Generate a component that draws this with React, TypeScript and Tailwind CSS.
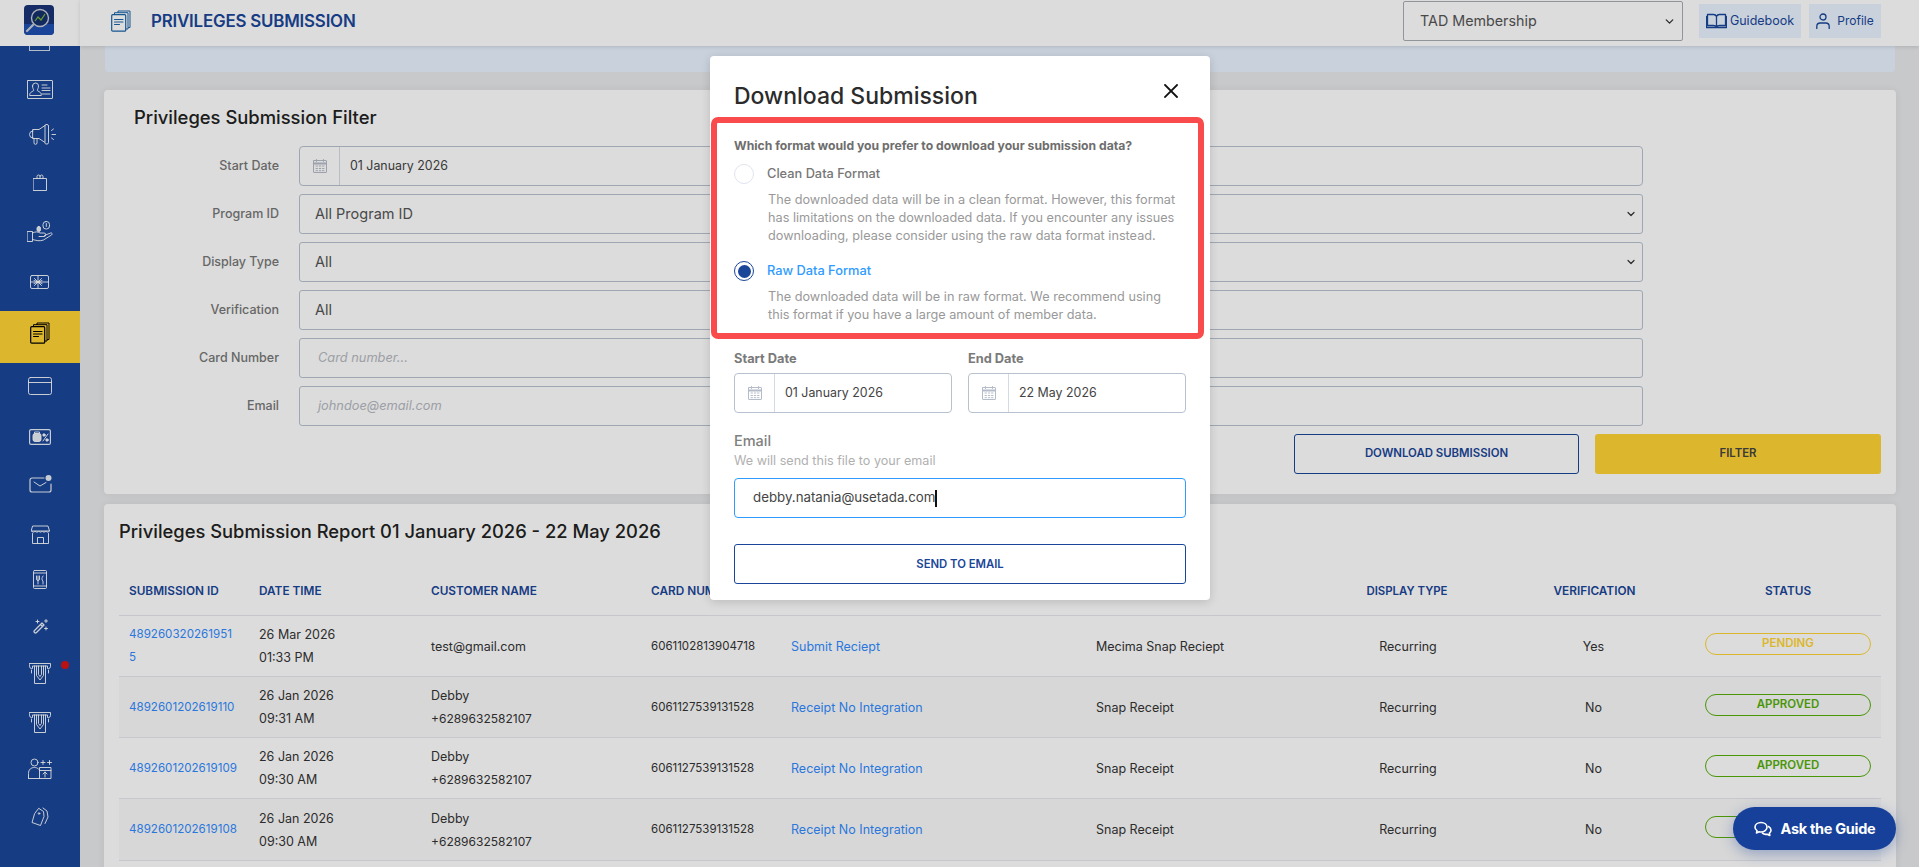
import React from "react";
import { ChevronDown } from "lucide-react";

const font = "font-['Inter','Open_Sans',sans-serif]";

const Ico = ({ w, h, children, className = "" }: { w: number; h: number; children: React.ReactNode; className?: string }) => (
  <svg width={w} height={h} viewBox={`0 0 ${w} ${h}`} fill="none" stroke="currentColor" strokeWidth="1" strokeLinecap="round" strokeLinejoin="round" className={className}>
    {children}
  </svg>
);

const DocsIcon = ({ className = "" }: { className?: string }) => (
  <Ico w={20} h={22} className={className}>
    <rect x=".7" y="4.700" width="14" height="16.500" rx="1" strokeWidth="1.200" />
    <path d="M3.500 9.500h8.500M3.500 12h8.500M3.500 14.500h5" strokeWidth="1.100" />
    <path d="M3.500 4.500V2.700h13.500V19h-2" />
    <path d="M7 2.500V1h12v16.500h-1.500" />
  </Ico>
);

const CalIcon = () => (
  <Ico w={14} h={14} className="text-[#b5bcc9]">
    <rect x=".5" y="1.500" width="13" height="12" rx=".5" />
    <path d="M.5 4.500h13" strokeWidth="2" />
    <path d="M3.500 .5v2M10.500 .5v2M3 7h1.500M6.300 7h1.500M9.500 7h1.500M3 9.500h1.500M6.300 9.500h1.500M9.500 9.500h1.500M3 11.700h1.500M6.300 11.700h1.500M9.500 11.700h1.500" />
  </Ico>
);

const Atm = () => (
  <Ico w={22} h={21}>
    <path d="M.5 .5h21v3a2 2 0 0 1-2 2h-1V3h-15v2.500h-1a2 2 0 0 1-2-2z" />
    <path d="M5.500 3v17.500h11V3M7.500 3v9.500l3.500 4.500 3.500-4.500V3M9.500 3v8.500l1.500 2 1.500-2V3M2.500 7v3M19.500 7v3" />
  </Ico>
);

function Slot({ className, children }: { className: string; children: React.ReactNode }) {
  return <div className={`h-[30px] shrink-0 flex items-center justify-center text-white/90 ${className}`}>{children}</div>;
}

function Sidebar() {
  return (
    <aside className="w-[80px] shrink-0 bg-[#1a4699] flex flex-col overflow-hidden h-[867px]">
      <div className="h-[46px] shrink-0 bg-white flex items-start justify-center pt-[5px] pr-[2px]">
        <svg viewBox="0 0 30 30" className="w-[30px] h-[30px]">
          <rect width="30" height="30" rx="4" fill="#1a3478" />
          <path d="M0 19h30v7a4 4 0 0 1-4 4H4a4 4 0 0 1-4-4z" fill="#1f4fb0" />
          <circle cx="16" cy="13" r="8.500" fill="#16306e" stroke="#c9ced8" strokeWidth="1.400" />
          <path d="M9 20l-6 6" stroke="#c9ced8" strokeWidth="2.200" strokeLinecap="round" />
          <path d="M11 16l3-4 3 3 4-6" stroke="#7fb83a" strokeWidth="1.200" fill="none" />
        </svg>
      </div>
      <div className="h-[5px] shrink-0 flex justify-center">
        <div className="w-[21px] h-[5px] border border-t-0 border-white/80 ml-[-1px]" />
      </div>
      <Slot className="mt-[23px]">
        <Ico w={26} h={19}>
          <rect x=".5" y=".5" width="25" height="18" rx=".5" />
          <path d="M5.500 6a3 3 0 0 1 6 0c0 2-1 3-1.200 4.500l3 2c.8.5 1 1.500 1 3H2.700c0-1.500.2-2.500 1-3l3-2C6.500 9 5.500 8 5.500 6zM15 5h5M15 8h8M15 10.500h8M15 14h8" />
        </Ico>
      </Slot>
      <Slot className="mt-[15px]">
        <Ico w={29} h={21} className="ml-[2px]">
          <path d="M6 5.500h6l6-4v17l-6-4H6zM6 7a3.500 3.500 0 0 0 0 7M7 14.500v4.300a1.500 1.500 0 0 0 3 0v-4.300M18 1.500a1 1 0 0 1 1-1h1a1.500 1.500 0 0 1 1.500 1.500v16.500a1.500 1.500 0 0 1-1.500 1.500h-1a1 1 0 0 1-1-1M24.500 6.500l2-1.500M25 10.500h3.500M24.500 14l2 1.500" />
        </Ico>
      </Slot>
      <Slot className="mt-[18px]">
        <Ico w={14} h={17}>
          <rect x=".5" y="4.500" width="13" height="12" />
          <path d="M4 4.500V2.500a1.500 1.500 0 0 1 3 0v2M7 2.500a1.500 1.500 0 0 1 3 0v2" />
        </Ico>
      </Slot>
      <Slot className="mt-[19px]">
        <Ico w={26} h={21}>
          <rect x=".5" y="10.500" width="5" height="10" />
          <path d="M5.500 12c3-1.500 5-1.500 7.500 0h4a1.500 1.500 0 0 1 0 3.500h-5M17.500 14.500l6-2.500c1.500-.5 2.300 1 1 2l-8 5c-4 1.500-7 .5-11-.5" />
          <rect x="16" y=".5" width="6.500" height="7.500" rx="3" />
          <path d="M19.300 2.500v3" />
          <rect x="10" y="5.500" width="3.500" height="5" rx="1.700" fill="currentColor" />
        </Ico>
      </Slot>
      <Slot className="mt-[21px] pr-[1px]">
        <Ico w={19} h={14}>
          <rect x=".5" y=".5" width="18" height="13" rx="1.500" />
          <path d="M.5 7h18M8 .5v13M8 7L4.500 3.500M8 7l-3.500 3.500M8 7l3.500-3.500M8 7l3.500 3.500M4 5.500l8 3M4 8.500l8-3" />
        </Ico>
      </Slot>
      <div className="mt-[14px] h-[52px] shrink-0 bg-[#ffd536] text-black flex items-start justify-center pt-[11px]">
        <DocsIcon />
      </div>
      <Slot className="mt-[8px]">
        <Ico w={24} h={18}>
          <rect x=".5" y=".5" width="23" height="17" rx="2" />
          <path d="M.5 5.500h23" />
        </Ico>
      </Slot>
      <Slot className="mt-[21px]">
        <Ico w={22} h={16}>
          <rect x=".6" y=".6" width="20.800" height="14.800" rx="1.500" strokeWidth="1.200" />
          <rect x="4" y="4.500" width="8" height="8" rx="2" fill="currentColor" />
          <path d="M5.500 4V3h5v1" />
          <path d="M14 12l5-7" />
          <circle cx="15" cy="6" r="1.200" fill="currentColor" />
          <circle cx="18" cy="11" r="1.200" fill="currentColor" />
        </Ico>
      </Slot>
      <Slot className="mt-[17px]">
        <Ico w={23} h={18}>
          <path d="M15 3H3a2 2 0 0 0-2 2v10a2 2 0 0 0 2 2h17a2 2 0 0 0 2-2V9" strokeWidth="1.200" />
          <path d="M5 7l6 4 6-3.500" />
          <circle cx="19.500" cy="3" r="3" fill="currentColor" stroke="none" />
        </Ico>
      </Slot>
      <Slot className="mt-[20px]">
        <Ico w={19} h={19}>
          <path d="M2 1h15l1.500 5H.5zM.5 6a2 2 0 0 0 3.600 0 2 2 0 0 0 3.600 0 2 2 0 0 0 3.600 0 2 2 0 0 0 3.600 0 2 2 0 0 0 3.600 0M1.500 8.500v10h16v-10M6.500 18.500v-6h6v6" />
        </Ico>
      </Slot>
      <Slot className="mt-[15px]">
        <Ico w={14} h={19}>
          <rect x=".5" y=".5" width="13" height="18" rx="1" />
          <path d="M.5 3h13M.5 16h13M3.500 6v3a1.500 1.500 0 0 0 3 0V6M5 6v8M10 6c-1.500 2-1.500 4 0 5v3" />
        </Ico>
      </Slot>
      <Slot className="mt-[17px]">
        <Ico w={15} h={15}>
          <path d="M1.500 11.500L9 4l2 2-7.500 7.500a1.400 1.400 0 0 1-2-2zM7.500 5.500l2 2" strokeWidth="1.300" />
          <path d="M4.500 1v3M3 2.500h3M13 .5v3M11.500 2h3M13 8v3M11.500 9.500h3" />
        </Ico>
      </Slot>
      <div className="relative mt-[17px]">
        <Slot className=""><Atm /></Slot>
        <span className="absolute left-[61px] top-[3px] w-[8px] h-[8px] rounded-full bg-[#d81616]" />
      </div>
      <Slot className="mt-[19px]"><Atm /></Slot>
      <Slot className="mt-[16px]">
        <Ico w={24} h={21}>
          <circle cx="6.500" cy="4.500" r="3.500" />
          <path d="M.5 20.500v-5c0-4 2.500-6 6-6 1.500 0 3 .5 4 1.500M.5 20.500h22.500V9.500H11.500v11M11.500 12.500h11.500M17 19v-5M15 16l2-2 2 2M13 4.500h4M15 2.500v4M19.500 4.500h4M21.500 2.500v4" />
        </Ico>
      </Slot>
      <Slot className="mt-[18px]">
        <Ico w={18} h={19}>
          <path d="M8 1.500l4.500 3 .5 5-3.500 9L1 15.500 3.500 7z" />
          <circle cx="8" cy="6.500" r=".8" />
          <path d="M12 1l4 3 1 6-3 6.500" />
        </Ico>
      </Slot>
    </aside>
  );
}

function Header() {
  return (
    <header className="h-[46px] shrink-0 bg-white shadow-[0_1px_4px_rgba(0,0,0,0.12)] flex items-center relative">
      <DocsIcon className="ml-[31px] mb-[5px] text-[#1a64a8]" />
      <h1 className="ml-[20px] mb-[3px] text-[16.900px] font-semibold text-[#1a4699] tracking-[-0.2px]">PRIVILEGES SUBMISSION</h1>
      <div className="ml-auto w-[280px] h-[40px] mb-[4px] border border-[#a9adb3] rounded-[2px] flex items-center justify-between pl-[16px] pr-[6px] text-[14.300px] text-[#555]">
        <span>TAD Membership</span>
        <ChevronDown className="w-[13px] h-[13px] text-[#333]" strokeWidth={2.4} />
      </div>
      <div className="ml-[16px] w-[102px] h-[34px] bg-[#e8f3ff] flex items-center justify-center gap-[3px] text-[12.500px] text-[#1a4699] mb-[4px]">
        <Ico w={21} h={16} className="shrink-0">
          <path d="M1.500 1.500h6c1.300 0 2.500.7 3 2 .5-1.300 1.700-2 3-2h6v11h-6c-1.300 0-2.500.5-3 1.500-.5-1-1.700-1.500-3-1.500h-6zM10.500 3.500V14M.5 3.500v11h20v-11" strokeWidth="1.300" />
        </Ico>
        <span>Guidebook</span>
      </div>
      <div className="ml-[8px] mr-[38px] w-[72px] h-[34px] bg-[#e8f3ff] flex items-center justify-center gap-[7px] text-[12px] text-[#1a4699] mb-[4px]">
        <Ico w={14} h={16} className="shrink-0">
          <circle cx="7" cy="4" r="3" strokeWidth="1.300" />
          <path d="M.8 15.500v-2c0-2 1.500-3.500 3.500-3.500h5.400c2 0 3.500 1.500 3.500 3.500v2" strokeWidth="1.300" />
        </Ico>
        <span>Profile</span>
      </div>
    </header>
  );
}

function CalBox({ value }: { value: string }) {
  return (
    <div className="h-[40px] flex-1 min-w-0 flex border border-[#b8c2cf] rounded-[4px] items-center text-[12.400px] text-[#444] bg-white">
      <div className="w-[40px] h-full shrink-0 border-r border-[#d5dbe3] flex items-center justify-center">
        <CalIcon />
      </div>
      <span className="pl-[10px]">{value}</span>
    </div>
  );
}

const filterRows = [
  { label: "Program ID", text: "All Program ID", select: true },
  { label: "Display Type", text: "All", select: true },
  { label: "Verification", text: "All" },
  { label: "Card Number", ph: "Card number..." },
  { label: "Email", ph: "johndoe@email.com" },
];

function FilterCard() {
  return (
    <section className="h-[404px] bg-white rounded-[4px] shadow-[0_0_8px_rgba(0,0,0,0.06)] pt-[17px]">
      <h2 className="ml-[30px] text-[18.400px] font-medium text-[#222] leading-[20px]">Privileges Submission Filter</h2>
      <div className="mt-[19px] flex flex-col gap-[8px]">
        <div className="flex items-center">
          <label className="w-[175px] text-right text-[12.500px] font-medium text-[#777]">Start Date</label>
          <div className="ml-[20px] w-[1344px] flex"><CalBox value="01 January 2026" /></div>
        </div>
        {filterRows.map((r) => (
          <div key={r.label} className="flex items-center">
            <label className="w-[175px] text-right text-[12.500px] font-medium text-[#777]">{r.label}</label>
            <div className={`ml-[20px] w-[1344px] h-[40px] border border-[#b8c2cf] rounded-[3px] flex items-center justify-between pr-[5px] ${r.ph ? "pl-[18px] text-[12.800px] italic text-[#b5b9c0]" : "pl-[15px] text-[14.500px] text-[#555]"}`}>
              <span>{r.text ?? r.ph}</span>
              {r.select && <ChevronDown className="w-[12px] h-[12px] text-[#333]" strokeWidth={2.4} />}
            </div>
          </div>
        ))}
      </div>
      <div className="flex justify-end gap-[16px] mr-[15px] mt-[8px]">
        <button className="w-[285px] h-[40px] border border-[#1a4699] rounded-[3px] text-[11.400px] font-semibold text-[#1a4699]">DOWNLOAD SUBMISSION</button>
        <button className="w-[286px] h-[40px] bg-[#ffd536] rounded-[3px] text-[11.400px] font-semibold text-[#444]">FILTER</button>
      </div>
    </section>
  );
}

const tableRows = [
  { id: ["489260320261951", "5"], d: "26 Mar 2026", t: "01:33 PM", name: ["test@gmail.com"], card: "6061102813904718", prog: "Submit Reciept", ben: "Mecima Snap Reciept", ver: "Yes", st: "PENDING" },
  { id: ["4892601202619110"], d: "26 Jan 2026", t: "09:31 AM", name: ["Debby", "+6289632582107"], card: "6061127539131528", prog: "Receipt No Integration", ben: "Snap Receipt", ver: "No", st: "APPROVED" },
  { id: ["4892601202619109"], d: "26 Jan 2026", t: "09:30 AM", name: ["Debby", "+6289632582107"], card: "6061127539131528", prog: "Receipt No Integration", ben: "Snap Receipt", ver: "No", st: "APPROVED" },
  { id: ["4892601202619108"], d: "26 Jan 2026", t: "09:30 AM", name: ["Debby", "+6289632582107"], card: "6061127539131528", prog: "Receipt No Integration", ben: "Snap Receipt", ver: "No", st: "APPROVED" },
];

const cols = "grid grid-cols-[130px_172px_220px_140px_305px_234px_174px_201px_186px]";

function ReportCard() {
  return (
    <section className="bg-white rounded-[4px] shadow-[0_0_8px_rgba(0,0,0,0.06)] h-[420px] pt-[17px] px-[15px]">
      <h2 className="text-[18.350px] font-medium text-[#222] leading-[20px]">Privileges Submission Report 01 January 2026 - 22 May 2026</h2>
      <div className="mt-[27px]">
        <div className={`${cols} h-[48px] items-center border-b border-[#e6e7ee] font-semibold text-[11.800px] text-[#1a4699]`}>
          <div className="pl-[10px]">SUBMISSION ID</div>
          <div className="pl-[10px]">DATE TIME</div>
          <div className="pl-[10px]">CUSTOMER NAME</div>
          <div className="pl-[10px] whitespace-nowrap">CARD NUMBER</div>
          <div className="pl-[10px]">PROGRAM NAME</div>
          <div className="pl-[10px]">BENEFIT NAME</div>
          <div className="text-center text-[11.400px]">DISPLAY TYPE</div>
          <div className="text-center">VERIFICATION</div>
          <div className="text-center">STATUS</div>
        </div>
        {tableRows.map((r, i) => (
          <div key={i} className={`${cols} ${i === 3 ? "h-[62px]" : "h-[61px]"} items-center border-b border-[#e6e7ee] text-[12.500px] leading-[23px] text-[#333] ${i % 2 === 1 ? "bg-[#fafafa]" : ""}`}>
            <div className="pl-[10px] text-[#318bff] text-[11.600px]">
              {r.id.map((l) => <div key={l}>{l}</div>)}
            </div>
            <div className="pl-[10px]"><div>{r.d}</div><div>{r.t}</div></div>
            <div className="pl-[10px]">{r.name.map((l) => <div key={l} className={l.startsWith("+") ? "text-[12px]" : ""}>{l}</div>)}</div>
            <div className="pl-[10px] text-[11.500px]">{r.card}</div>
            <div className="pl-[10px] text-[#318bff]">{r.prog}</div>
            <div className="pl-[10px]">{r.ben}</div>
            <div className="text-center pl-[2px]">Recurring</div>
            <div className="text-center pr-[2px]">{r.ver}</div>
            <div className="flex justify-center">
              <div className={`w-[166px] h-[22px] mb-[5px] rounded-full border flex items-center justify-center text-[11.500px] font-semibold ${r.st === "PENDING" ? "border-[#ffd536] text-[#ffd536]" : "border-[#56ae09] text-[#56ae09]"}`}>{r.st}</div>
            </div>
          </div>
        ))}
      </div>
    </section>
  );
}

function Radio({ on }: { on?: boolean }) {
  return (
    <span className={`w-[20px] h-[20px] shrink-0 rounded-full flex items-center justify-center bg-white border ${on ? "border-[1.5px] border-[#1a4699]" : "border-[#e2e4ee]"}`}>
      {on && <span className="w-[13px] h-[13px] rounded-full bg-[#1a4699]" />}
    </span>
  );
}

function Modal() {
  return (
    <div className="absolute left-[710px] top-[56px] w-[500px] h-[544px] bg-white rounded-[4px] shadow-[0_2px_10px_rgba(0,0,0,0.15)] px-[24px] pt-[24px] z-30">
      <h2 className="text-[23px] font-medium text-[#2b2b2b] leading-[30px] pt-[1px] h-[30px]">Download Submission</h2>
      <svg width="14" height="14" viewBox="0 0 14 14" className="absolute left-[454px] top-[28px]" stroke="#111" strokeWidth="1.800" strokeLinecap="square">
        <path d="M1 1l12 12M13 1L1 13" />
      </svg>
      <p className="mt-[27px] text-[12.200px] leading-[18px] font-bold text-[#6e6e6e] whitespace-nowrap">Which format would you prefer to download your submission data?</p>
      <div className="mt-[9px] flex items-center gap-[13px]">
        <Radio />
        <span className="text-[12.800px] font-medium text-[#777]">Clean Data Format</span>
      </div>
      <p className="mt-[7px] pl-[34px] text-[12.700px] leading-[18px] text-[#999] whitespace-nowrap">
        The downloaded data will be in a clean format. However, this format<br />
        has limitations on the downloaded data. If you encounter any issues<br />
        downloading, please consider using the raw data format instead.
      </p>
      <div className="mt-[16px] flex items-center gap-[13px]">
        <Radio on />
        <span className="text-[12.800px] font-medium text-[#2f9bff]">Raw Data Format</span>
      </div>
      <p className="mt-[7px] pl-[34px] text-[12.700px] leading-[18px] text-[#999] whitespace-nowrap">
        The downloaded data will be in raw format. We recommend using<br />
        this format if you have a large amount of member data.
      </p>
      <div className="mt-[26px] grid grid-cols-2 gap-[16px]">
        <div>
          <label className="block text-[12.800px] leading-[18px] font-bold text-[#7a7a7a] mb-[5px]">Start Date</label>
          <div className="flex"><CalBox value="01 January 2026" /></div>
        </div>
        <div>
          <label className="block text-[12.800px] leading-[18px] font-bold text-[#7a7a7a] mb-[5px]">End Date</label>
          <div className="flex"><CalBox value="22 May 2026" /></div>
        </div>
      </div>
      <label className="block mt-[18px] text-[14.500px] leading-[20px] font-medium text-[#808080]">Email</label>
      <p className="mt-[1px] text-[12.600px] leading-[18px] text-[#b0b0b0]">We will send this file to your email</p>
      <div className="mt-[8px] h-[40px] border border-[#2f9bff] rounded-[4px] flex items-center pl-[18px] text-[13.300px] text-[#444]">
        <span>debby.natania@usetada.com</span>
        <span className="w-[2px] h-[17px] bg-[#111]" />
      </div>
      <button className="mt-[26px] w-full h-[40px] border border-[#1a4699] rounded-[3px] text-[11.300px] font-semibold text-[#1a4699]">SEND TO EMAIL</button>
      <div className="absolute left-[1px] top-[61px] w-[493px] h-[222px] border-[6px] border-[#f94b4b] rounded-[7px] pointer-events-none" />
    </div>
  );
}

export default function App() {
  return (
    <div className={`${font} relative h-[867px] overflow-hidden flex bg-[#e8e9eb]`}>
      <Sidebar />
      <div className="flex-1 flex flex-col min-w-0">
        <Header />
        <main className="flex flex-col pl-[24px] pr-[23px]">
          <div className="h-[26px] bg-[#e8f3ff] rounded-b-[4px] mx-[1px]" />
          <div className="h-[18px]" />
          <FilterCard />
          <div className="h-[10px]" />
          <ReportCard />
        </main>
      </div>
      <div className="absolute inset-0 bg-black/[0.137] z-20" />
      <Modal />
      <button className="absolute left-[1733px] top-[807px] w-[163px] h-[43px] rounded-full bg-[#16409a] text-white text-[14.500px] font-bold tracking-[-0.3px] flex items-center justify-center gap-[9px] shadow-[0_4px_14px_rgba(22,64,154,0.35)] z-30">
        <Ico w={18} h={16} className="shrink-0">
          <path d="M7 1.500c3.300 0 6 2 6 4.700S10.300 11 7 11c-.7 0-1.300-.1-1.900-.3L2.500 12l.5-2.300C1.800 8.800 1 7.600 1 6.200 1 3.500 3.700 1.500 7 1.500z" strokeWidth="1.600" />
          <path d="M14.500 5.500c1.500.8 2.500 2.200 2.500 3.700 0 1.200-.6 2.300-1.600 3l.4 2.300-2.600-1.300c-1.700.3-3.600 0-4.800-1" strokeWidth="1.600" />
        </Ico>
        <span>Ask the Guide</span>
      </button>
    </div>
  );
}
